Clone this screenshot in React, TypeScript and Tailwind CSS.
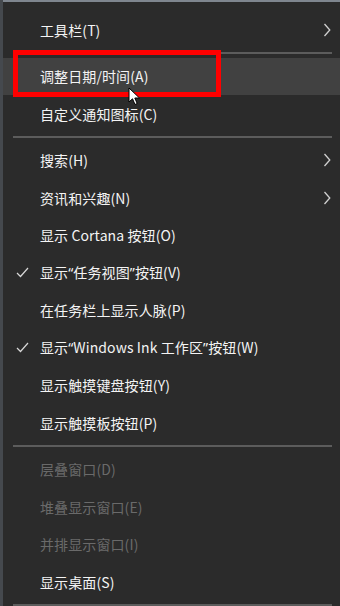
import React from 'react';

// Windows 10 taskbar context menu (dark theme)

type Item =
  | { kind: 'sep' }
  | {
      kind: 'item';
      label: string;
      sub?: boolean;
      checked?: boolean;
      disabled?: boolean;
      hover?: boolean;
    };

const items: Item[] = [
  { kind: 'item', label: '工具栏(T)', sub: true },
  { kind: 'sep' },
  { kind: 'item', label: '调整日期/时间(A)', hover: true },
  { kind: 'item', label: '自定义通知图标(C)' },
  { kind: 'sep' },
  { kind: 'item', label: '搜索(H)', sub: true },
  { kind: 'item', label: '资讯和兴趣(N)', sub: true },
  { kind: 'item', label: '显示 Cortana 按钮(O)' },
  { kind: 'item', label: '显示“任务视图”按钮(V)', checked: true },
  { kind: 'item', label: '在任务栏上显示人脉(P)' },
  { kind: 'item', label: '显示“Windows Ink 工作区”按钮(W)', checked: true },
  { kind: 'item', label: '显示触摸键盘按钮(Y)' },
  { kind: 'item', label: '显示触摸板按钮(P)' },
  { kind: 'sep' },
  { kind: 'item', label: '层叠窗口(D)', disabled: true },
  { kind: 'item', label: '堆叠显示窗口(E)', disabled: true },
  { kind: 'item', label: '并排显示窗口(I)', disabled: true },
  { kind: 'item', label: '显示桌面(S)' },
  { kind: 'sep' },
];

// curly quotes are narrow in the Windows UI font, so render them with a Latin face
function Label({ text }: { text: string }) {
  const parts = text.split(/([“”])/);
  return (
    <>
      {parts.map((p, i) =>
        p === '“' || p === '”' ? (
          <span key={i} style={{ fontFamily: '"Noto Sans", sans-serif' }}>
            {p}
          </span>
        ) : (
          <React.Fragment key={i}>{p}</React.Fragment>
        )
      )}
    </>
  );
}

function Chevron() {
  return (
    <svg width="8" height="14" viewBox="0 0 8 14" fill="none">
      <polyline points="1.5,1 6.8,7 1.5,13" stroke="#d0d0d0" strokeWidth="1.3" />
    </svg>
  );
}

function Check() {
  return (
    <svg width="13" height="11" viewBox="0 0 13 11" fill="none">
      <polyline points="1,6 4.5,9.5 12,1" stroke="#d8d8d8" strokeWidth="1.2" />
    </svg>
  );
}

function Cursor() {
  return (
    <svg width="13" height="19" viewBox="0 0 13 19">
      <path
        d="M1 1 L1 15 L4.5 11.8 L7 17.5 L9.2 16.5 L6.8 11 L11.5 11 Z"
        fill="#ffffff"
        stroke="#000000"
        strokeWidth="1"
        strokeLinejoin="round"
      />
    </svg>
  );
}

export default function App() {
  return (
    <div
      className="relative w-[340px] h-[606px] overflow-hidden bg-[#2b2b2b] select-none"
      style={{ fontFamily: '"Noto Sans CJK SC", "Noto Sans", sans-serif' }}
    >
      {/* window edge highlights */}
      <div className="absolute left-0 top-0 w-full h-[2px] bg-[#7f868f]" />
      <div className="absolute left-0 top-0 w-[3px] h-full bg-[#45494e]" />

      <div className="flex flex-col pt-[11px] pl-[3px]">
        {items.map((it, i) =>
          it.kind === 'sep' ? (
            <div key={i} className="pt-[3px] pb-[4px] pl-[10px] pr-[8px]">
              <div className="h-[2px] bg-[#5c5c5c]" />
            </div>
          ) : (
            <div
              key={i}
              className={`flex items-center h-[37.5px] pr-[9px] ${it.hover ? 'bg-[#414141]' : ''}`}
            >
              <div className="w-[37px] flex justify-center pl-[2px]">{it.checked && <Check />}</div>
              <span
                className={`flex-1 text-[14px] leading-none tracking-[0.1px] ${
                  it.disabled ? 'text-[#6a6a6a]' : 'text-[#f4f4f4]'
                }`}
              >
                <Label text={it.label} />
              </span>
              {it.sub && <Chevron />}
            </div>
          )
        )}
      </div>

      {/* red annotation box */}
      <div className="absolute left-[13px] top-[50px] w-[208px] h-[47px] border-[5px] border-[#ff0000]" />

      {/* mouse pointer */}
      <div className="absolute left-[128px] top-[87px]">
        <Cursor />
      </div>
    </div>
  );
}
